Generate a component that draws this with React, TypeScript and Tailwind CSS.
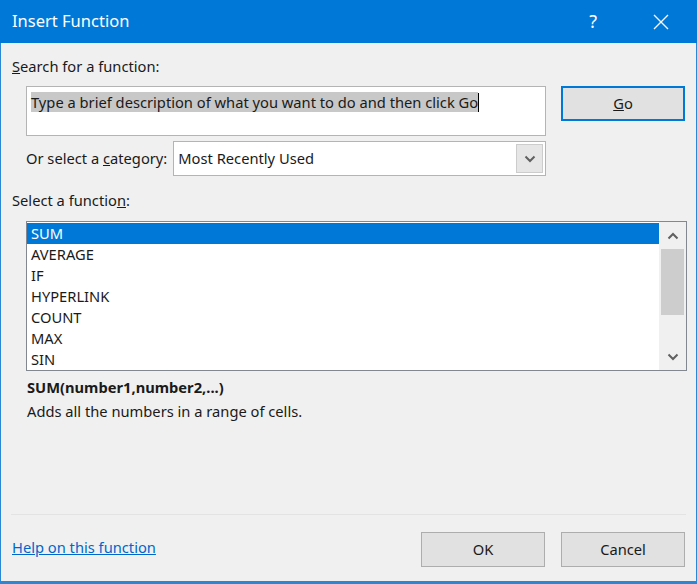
import type { ReactNode } from "react";

const FUNCTIONS = ["SUM", "AVERAGE", "IF", "HYPERLINK", "COUNT", "MAX", "SIN"];

function Btn({ children, focused }: { children: ReactNode; focused?: boolean }) {
  return (
    <button
      className={`flex h-[35px] w-[124px] items-center justify-center bg-[#e1e1e1] text-[#1a1a1a] ${
        focused ? "border-2 border-[#0078d7]" : "border border-[#adadad]"
      }`}
    >
      {children}
    </button>
  );
}

function Chevron({ up }: { up?: boolean }) {
  return (
    <svg width="12" height="8" viewBox="0 0 12 8" className="text-[#606060]">
      <path
        d={up ? "M1.5 6.5 L6 2 L10.5 6.5" : "M1.5 1.5 L6 6 L10.5 1.5"}
        fill="none"
        stroke="currentColor"
        strokeWidth="2"
      />
    </svg>
  );
}

export default function App() {
  return (
    <div
      className="flex h-[584px] w-[697px] flex-col bg-[#f0f0f0] text-[14.7px] text-[#1a1a1a]"
      style={{ fontFamily: '"Noto Sans", "Open Sans", sans-serif' }}
    >
      {/* title bar */}
      <div className="flex h-[43px] shrink-0 items-center bg-[#0078d7] pl-3 text-white">
        <span className="text-[16.5px]">Insert Function</span>
        <span className="ml-auto mr-[56px] text-[18px]">?</span>
        <svg width="16" height="16" viewBox="0 0 16 16" className="mr-[28px]">
          <path d="M1 1 L15 15 M15 1 L1 15" stroke="white" strokeWidth="1.3" />
        </svg>
      </div>

      <div className="flex flex-1 flex-col border-x border-b-[3px] border-[#2b87d3] px-[11px]">
        <div className="mt-[13px] leading-5">
          <span className="underline">S</span>earch for a function:
        </div>

        <div className="mt-[10px] flex items-start">
          <div className="ml-[14px] h-[50px] w-[520px] border border-[#b4b4b4] bg-white px-1 pt-[2px]">
            <span className="bg-[#c8c8c8] leading-5">
              Type a brief description of what you want to do and then click Go
            </span>
            <span className="inline-block h-[19px] w-px translate-y-[4px] bg-black" />
          </div>
          <div className="ml-[15px]">
            <Btn focused>
              <span>
                <span className="underline">G</span>o
              </span>
            </Btn>
          </div>
        </div>

        <div className="ml-[14px] mt-[5px] flex w-[520px] items-center">
          <span className="mr-[6px]">
            Or select a <span className="underline">c</span>ategory:
          </span>
          <div className="flex h-[35px] flex-1 items-center border border-[#b4b4b4] bg-white pl-[4px]">
            <span>Most Recently Used</span>
            <div className="ml-auto mr-[2px] flex h-[29px] w-[27px] items-center justify-center border border-[#cccccc] bg-[#e6e6e6]">
              <Chevron />
            </div>
          </div>
        </div>

        <div className="mt-[14px] leading-5">
          Select a functio<span className="underline">n</span>:
        </div>

        <div className="ml-[14px] mt-[11px] flex h-[150px] w-[661px] border border-[#828790] bg-white">
          <div className="flex flex-1 flex-col pt-px">
            {FUNCTIONS.map((f, i) => (
              <div
                key={f}
                className={`h-[21px] pl-[4px] leading-[21px] ${
                  i === 0 ? "bg-[#0078d7] text-white" : ""
                }`}
              >
                {f}
              </div>
            ))}
          </div>
          <div className="flex w-[27px] flex-col items-center bg-[#f0f0f0]">
            <div className="flex h-[27px] items-center justify-center">
              <Chevron up />
            </div>
            <div className="h-[66px] w-[23px] bg-[#cdcdcd]" />
            <div className="mt-auto flex h-[27px] items-center justify-center">
              <Chevron />
            </div>
          </div>
        </div>

        <div className="ml-[15px] mt-[4px] font-bold leading-6">SUM(number1,number2,...)</div>
        <div className="ml-[15px] leading-6">Adds all the numbers in a range of cells.</div>

        <div className="mx-[-1px] mt-auto h-px bg-[#e3e3e3]" />

        <div className="flex h-[66px] items-center">
          <a className="-mt-[2px] text-[#0066cc] underline">Help on this function</a>
          <div className="ml-auto flex gap-[16px] pt-[2px]">
            <Btn>OK</Btn>
            <Btn>Cancel</Btn>
          </div>
        </div>
      </div>
    </div>
  );
}
